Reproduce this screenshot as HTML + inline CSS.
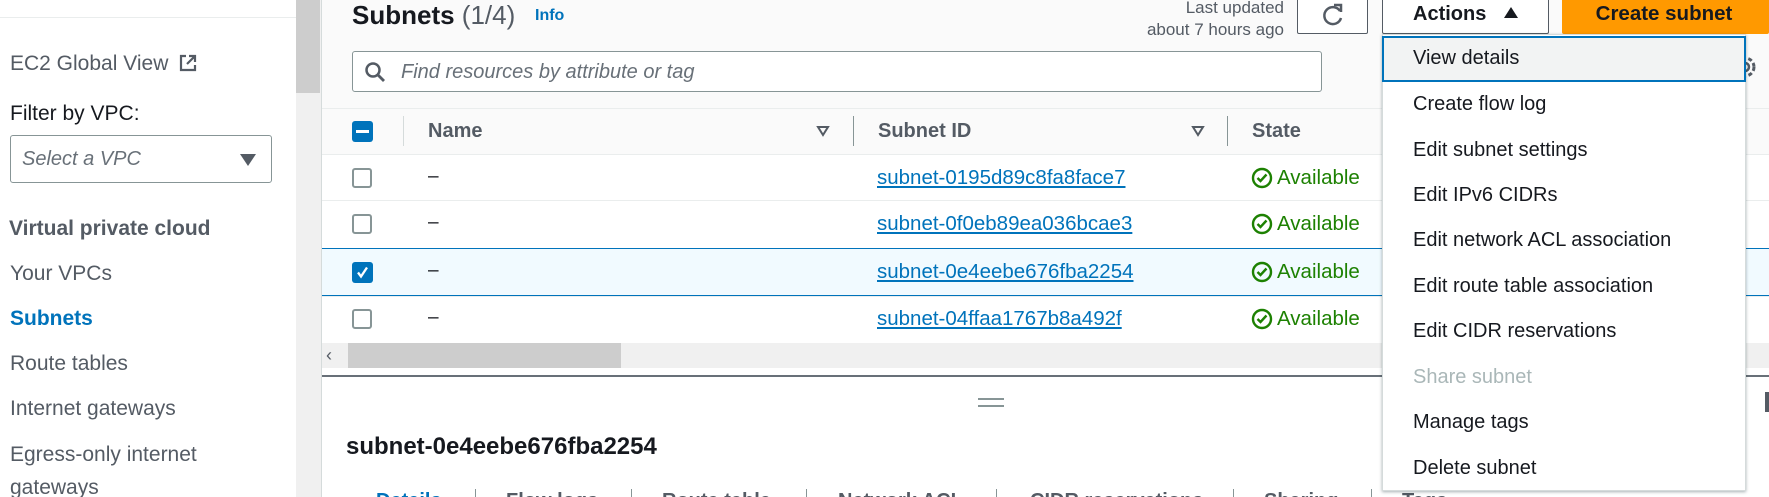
<!DOCTYPE html>
<html style="width:1769px;height:497px;overflow:hidden"><head><meta charset="utf-8"><style>
*{margin:0;padding:0;box-sizing:border-box}
body{width:1769px;height:497px;overflow:hidden;background:#fff;font-family:"Liberation Sans",Arial,sans-serif;color:#16191f;position:relative}
.a{position:absolute;white-space:nowrap}
.t{line-height:24px;height:24px}
.sb{color:#545b64;font-size:21px}
.cb{position:absolute;width:20px;height:20px;border:2px solid #879596;border-radius:3px;background:#fff}
.row{position:absolute;left:322px;width:1447px;border-top:1px solid #eaeded}
.cell{font-size:19px}
.lnk{color:#0073bb;text-decoration:underline;font-size:20.5px}
.av{color:#1d8102;font-size:20.5px}
.mi{position:absolute;left:1413px;font-size:20px;line-height:24px;color:#16191f}
.th{font-weight:bold;color:#545b64;font-size:20px}
.tab{position:absolute;top:489px;font-size:20px;font-weight:bold;color:#545b64;line-height:24px}
.div{position:absolute;width:1px;background:#d5dbdb}
</style></head><body>

<!-- sidebar -->
<div class="a" style="left:0;top:17px;width:296px;height:1px;background:#eaeded"></div>
<div class="a t sb" style="left:10px;top:52px">EC2 Global View
<svg width="20" height="20" viewBox="0 0 20 20" style="vertical-align:-3px;margin-left:4px"><path d="M8 3H3v14h14v-5" fill="none" stroke="#545b64" stroke-width="2.2"/><path d="M11 3h6v6M17 3l-8 8" fill="none" stroke="#545b64" stroke-width="2.2"/></svg></div>
<div class="a t" style="left:10px;top:102px;font-size:21px;color:#16191f">Filter by VPC:</div>
<div class="a" style="left:10px;top:135px;width:262px;height:48px;border:1px solid #879596;border-radius:3px"></div>
<div class="a t" style="left:22px;top:147px;font-size:20px;font-style:italic;color:#687078">Select a VPC</div>
<div class="a" style="left:240px;top:154px;width:0;height:0;border-left:8px solid transparent;border-right:8px solid transparent;border-top:12px solid #545b64"></div>
<div class="a t" style="left:9px;top:217px;font-size:21px;font-weight:bold;color:#545b64">Virtual private cloud</div>
<div class="a t sb" style="left:10px;top:262px">Your VPCs</div>
<div class="a t" style="left:10px;top:307px;font-size:21px;font-weight:bold;color:#0073bb">Subnets</div>
<div class="a t sb" style="left:10px;top:352px">Route tables</div>
<div class="a t sb" style="left:10px;top:397px">Internet gateways</div>
<div class="a t sb" style="left:10px;top:443px">Egress-only internet</div>
<div class="a t sb" style="left:10px;top:476px">gateways</div>

<!-- vertical scrollbar -->
<div class="a" style="left:296px;top:0;width:26px;height:497px;background:#f0f0f0"></div>
<div class="a" style="left:296px;top:0;width:24px;height:93px;background:#cdcdcd"></div>
<div class="a" style="left:321px;top:0;width:1px;height:497px;background:#d5dbdb"></div>

<!-- header -->
<div class="a" style="left:322px;top:0;width:1447px;height:108px;background:#fafafa"></div>
<div class="a" style="left:352px;top:0;line-height:30px;font-size:26px;font-weight:bold">Subnets <span style="font-weight:normal;color:#545b64">(1/4)</span></div>
<div class="a" style="left:535px;top:6px;font-size:16px;font-weight:bold;color:#0073bb;line-height:20px">Info</div>
<div class="a" style="left:1100px;width:184px;top:-3px;text-align:right;font-size:17px;color:#545b64;line-height:22px">Last updated<br>about 7 hours ago</div>
<div class="a" style="left:1297px;top:-2px;width:71px;height:36px;border:1px solid #545b64;border-radius:2px;background:#fff"></div>
<svg class="a" style="left:1320px;top:2px" width="26" height="26" viewBox="0 0 26 26"><path d="M20 9A8.5 8.5 0 1 0 21 16" fill="none" stroke="#545b64" stroke-width="2.5"/><path d="M14 3l7 0 0 7" fill="none" stroke="#545b64" stroke-width="2.5"/></svg>
<div class="a" style="left:1382px;top:-2px;width:167px;height:36px;border:1px solid #545b64;border-radius:2px;background:#fff"></div>
<div class="a" style="left:1413px;top:2px;font-size:20px;font-weight:bold;line-height:24px">Actions</div>
<div class="a" style="left:1504px;top:7px;width:0;height:0;border-left:7px solid transparent;border-right:7px solid transparent;border-bottom:11px solid #16191f"></div>
<div class="a" style="left:1562px;top:-2px;width:207px;height:36px;background:#ff9900;border-radius:2px"></div>
<div class="a" style="left:1562px;width:204px;top:2px;text-align:center;font-size:20.5px;font-weight:bold;line-height:24px">Create subnet</div>

<!-- search -->
<div class="a" style="left:352px;top:51px;width:970px;height:41px;border:1px solid #879596;border-radius:3px;background:#fff"></div>
<svg class="a" style="left:364px;top:61px" width="22" height="22" viewBox="0 0 22 22"><circle cx="9" cy="9" r="6.5" fill="none" stroke="#545b64" stroke-width="2.5"/><path d="M14 14l6 6" stroke="#545b64" stroke-width="2.8"/></svg>
<div class="a" style="left:401px;top:60px;font-size:20px;font-style:italic;color:#687078;line-height:24px">Find resources by attribute or tag</div>

<!-- table header -->
<div class="a" style="left:322px;top:108px;width:1447px;height:47px;background:#fafafa;border-top:1px solid #eaeded;border-bottom:1px solid #eaeded"></div>
<div class="a" style="left:352px;top:121px;width:21px;height:21px;background:#0073bb;border-radius:3px"></div>
<div class="a" style="left:356px;top:130px;width:13px;height:3px;background:#fff"></div>
<div class="div" style="left:403px;top:116px;height:30px"></div>
<div class="a t th" style="left:428px;top:119px">Name</div>
<svg class="a" style="left:816px;top:124px" width="14" height="14" viewBox="0 0 14 14"><path d="M2 3h10L7 11z" fill="none" stroke="#545b64" stroke-width="2"/></svg>
<div class="div" style="left:853px;top:116px;height:30px;background:#879596"></div>
<div class="a t th" style="left:878px;top:119px">Subnet ID</div>
<svg class="a" style="left:1191px;top:124px" width="14" height="14" viewBox="0 0 14 14"><path d="M2 3h10L7 11z" fill="none" stroke="#545b64" stroke-width="2"/></svg>
<div class="div" style="left:1227px;top:116px;height:30px;background:#879596"></div>
<div class="a t th" style="left:1252px;top:119px">State</div>

<!-- rows -->
<div class="row" style="top:154px;height:47px"></div>
<div class="row" style="top:200px;height:48px"></div>
<div class="a" style="left:322px;top:248px;width:1447px;height:48px;background:#f1faff;border-top:1px solid #0073bb;border-bottom:1px solid #0073bb"></div>
<div class="row" style="top:296px;height:47px"></div>

<div class="cb" style="left:352px;top:168px"></div>
<div class="cb" style="left:352px;top:214px"></div>
<div class="a" style="left:352px;top:262px;width:21px;height:21px;background:#0073bb;border-radius:3px"></div>
<svg class="a" style="left:352px;top:262px" width="21" height="21" viewBox="0 0 21 21"><path d="M6 10.5l3 4 6-9" fill="none" stroke="#fff" stroke-width="2.3"/></svg>
<div class="cb" style="left:352px;top:309px"></div>

<div class="a t cell" style="left:428px;top:165px">–</div>
<div class="a t cell" style="left:428px;top:211px">–</div>
<div class="a t cell" style="left:428px;top:259px">–</div>
<div class="a t cell" style="left:428px;top:306px">–</div>

<div class="a t lnk" style="left:877px;top:166px">subnet-0195d89c8fa8face7</div>
<div class="a t lnk" style="left:877px;top:212px">subnet-0f0eb89ea036bcae3</div>
<div class="a t lnk" style="left:877px;top:260px">subnet-0e4eebe676fba2254</div>
<div class="a t lnk" style="left:877px;top:307px">subnet-04ffaa1767b8a492f</div>

<svg class="a" style="left:1251px;top:167px" width="22" height="22" viewBox="0 0 22 22"><circle cx="11" cy="11" r="9" fill="none" stroke="#1d8102" stroke-width="2.4"/><path d="M6.5 11l3 3 6-6.5" fill="none" stroke="#1d8102" stroke-width="2.4"/></svg>
<svg class="a" style="left:1251px;top:213px" width="22" height="22" viewBox="0 0 22 22"><circle cx="11" cy="11" r="9" fill="none" stroke="#1d8102" stroke-width="2.4"/><path d="M6.5 11l3 3 6-6.5" fill="none" stroke="#1d8102" stroke-width="2.4"/></svg>
<svg class="a" style="left:1251px;top:261px" width="22" height="22" viewBox="0 0 22 22"><circle cx="11" cy="11" r="9" fill="none" stroke="#1d8102" stroke-width="2.4"/><path d="M6.5 11l3 3 6-6.5" fill="none" stroke="#1d8102" stroke-width="2.4"/></svg>
<svg class="a" style="left:1251px;top:308px" width="22" height="22" viewBox="0 0 22 22"><circle cx="11" cy="11" r="9" fill="none" stroke="#1d8102" stroke-width="2.4"/><path d="M6.5 11l3 3 6-6.5" fill="none" stroke="#1d8102" stroke-width="2.4"/></svg>
<div class="a t av" style="left:1277px;top:166px">Available</div>
<div class="a t av" style="left:1277px;top:212px">Available</div>
<div class="a t av" style="left:1277px;top:260px">Available</div>
<div class="a t av" style="left:1277px;top:307px">Available</div>

<!-- h scrollbar -->
<div class="a" style="left:322px;top:343px;width:1447px;height:25px;background:#f0f0f0"></div>
<div class="a" style="left:348px;top:343px;width:273px;height:25px;background:#cdcdcd"></div>
<div class="a" style="left:326px;top:344px;font-size:18px;color:#545b64;line-height:22px">‹</div>
<div class="a" style="left:322px;top:375px;width:1447px;height:2px;background:#687078"></div>

<!-- drag handle -->
<div class="a" style="left:978px;top:398px;width:26px;height:2px;background:#879596"></div>
<div class="a" style="left:978px;top:405px;width:26px;height:2px;background:#879596"></div>

<div class="a" style="left:346px;top:433px;font-size:24px;font-weight:bold;line-height:28px">subnet-0e4eebe676fba2254</div>

<!-- tabs -->
<div class="tab" style="left:376px;color:#0073bb">Details</div>
<div class="div" style="left:475px;top:489px;height:8px;background:#879596"></div>
<div class="tab" style="left:506px">Flow logs</div>
<div class="div" style="left:631px;top:489px;height:8px;background:#879596"></div>
<div class="tab" style="left:662px">Route table</div>
<div class="div" style="left:806px;top:489px;height:8px;background:#879596"></div>
<div class="tab" style="left:838px">Network ACL</div>
<div class="div" style="left:996px;top:489px;height:8px;background:#879596"></div>
<div class="tab" style="left:1030px">CIDR reservations</div>
<div class="div" style="left:1233px;top:489px;height:8px;background:#879596"></div>
<div class="tab" style="left:1264px">Sharing</div>
<div class="div" style="left:1371px;top:489px;height:8px;background:#879596"></div>
<div class="tab" style="left:1402px">Tags</div>

<!-- gear partial and right mark -->
<svg class="a" style="left:1730px;top:52px" width="30" height="30" viewBox="0 0 30 30"><circle cx="15" cy="15" r="9" fill="none" stroke="#545b64" stroke-width="3" stroke-dasharray="4 2.5"/><circle cx="15" cy="15" r="4" fill="none" stroke="#545b64" stroke-width="2.5"/></svg>
<div class="a" style="left:1765px;top:392px;width:4px;height:20px;background:#545b64"></div>

<!-- dropdown -->
<div class="a" style="left:1382px;top:34px;width:364px;height:457px;background:#fff;border:1px solid #d5dbdb;box-shadow:0 1px 3px rgba(0,28,36,.35)"></div>
<div class="a" style="left:1382px;top:36px;width:364px;height:46px;background:#f2f3f3;border:2px solid #0073bb"></div>
<div class="mi" style="top:46px">View details</div>
<div class="mi" style="top:92px">Create flow log</div>
<div class="mi" style="top:138px">Edit subnet settings</div>
<div class="mi" style="top:183px">Edit IPv6 CIDRs</div>
<div class="mi" style="top:228px">Edit network ACL association</div>
<div class="mi" style="top:274px">Edit route table association</div>
<div class="mi" style="top:319px">Edit CIDR reservations</div>
<div class="mi" style="top:365px;color:#aab7b8">Share subnet</div>
<div class="mi" style="top:410px">Manage tags</div>
<div class="mi" style="top:456px">Delete subnet</div>

</body></html>
